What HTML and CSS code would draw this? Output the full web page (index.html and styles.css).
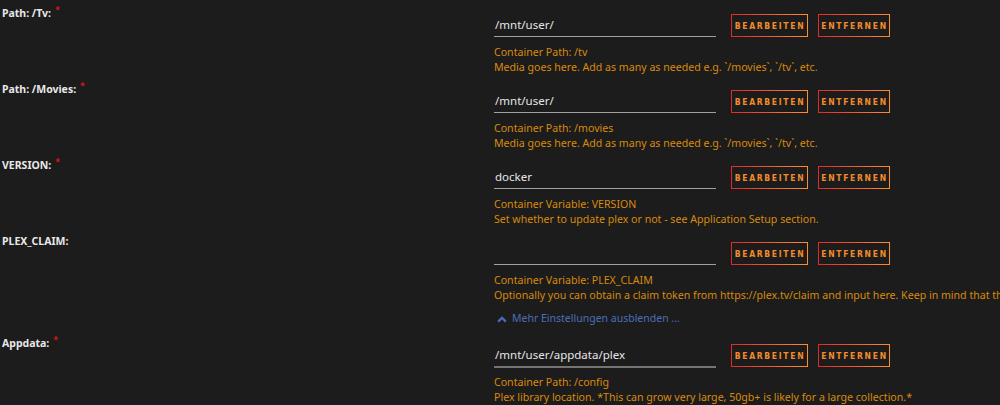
FILE: index.html
```html
<!DOCTYPE html>
<html>
<head>
<meta charset="utf-8">
<link rel="stylesheet" href="styles.css">
</head>
<body>
<div class="form">
  <div class="row">
    <div class="label">Path: /Tv:<span class="req">*</span></div>
    <div class="content">
      <div class="controls">
        <div class="input">/mnt/user/</div>
        <button class="btn"><span>Bearbeiten</span></button>
        <button class="btn narrow"><span>Entfernen</span></button>
      </div>
      <div class="desc">Container Path: /tv<br>Media goes here. Add as many as needed e.g. `/movies`, `/tv`, etc.</div>
    </div>
  </div>
  <div class="row">
    <div class="label">Path: /Movies:<span class="req">*</span></div>
    <div class="content">
      <div class="controls">
        <div class="input">/mnt/user/</div>
        <button class="btn"><span>Bearbeiten</span></button>
        <button class="btn narrow"><span>Entfernen</span></button>
      </div>
      <div class="desc">Container Path: /movies<br>Media goes here. Add as many as needed e.g. `/movies`, `/tv`, etc.</div>
    </div>
  </div>
  <div class="row">
    <div class="label">VERSION:<span class="req">*</span></div>
    <div class="content">
      <div class="controls">
        <div class="input">docker</div>
        <button class="btn"><span>Bearbeiten</span></button>
        <button class="btn narrow"><span>Entfernen</span></button>
      </div>
      <div class="desc">Container Variable: VERSION<br>Set whether to update plex or not - see Application Setup section.</div>
    </div>
  </div>
  <div class="row">
    <div class="label">PLEX_CLAIM:</div>
    <div class="content">
      <div class="controls">
        <div class="input"></div>
        <button class="btn"><span>Bearbeiten</span></button>
        <button class="btn narrow"><span>Entfernen</span></button>
      </div>
      <div class="desc clip">Container Variable: PLEX_CLAIM<br>Optionally you can obtain a claim token from https://plex.tv/claim and input here. Keep in mind that the claim tokens expire within 4 minutes.</div>
    </div>
  </div>
  <div class="toggle">
    <svg class="chev" width="10" height="8" viewBox="0 0 10 8"><path d="M1.2 6.6 L5 2.8 L8.8 6.6" fill="none" stroke="#4a6fb8" stroke-width="2.2"/></svg>
    <span>Mehr Einstellungen ausblenden ...</span>
  </div>
  <div class="row">
    <div class="label">Appdata:<span class="req">*</span></div>
    <div class="content">
      <div class="controls">
        <div class="input dim">/mnt/user/appdata/plex</div>
        <button class="btn"><span>Bearbeiten</span></button>
        <button class="btn narrow"><span>Entfernen</span></button>
      </div>
      <div class="desc">Container Path: /config<br>Plex library location. *This can grow very large, 50gb+ is likely for a large collection.*</div>
    </div>
  </div>
</div>
</body>
</html>
```
FILE: styles.css
```css
html, body {
  margin: 0;
  padding: 0;
  background: #1c1c1c;
  overflow: hidden;
  width: 1000px;
  height: 405px;
}
body {
  font-family: "Noto Sans", "DejaVu Sans", sans-serif;
  color: #e6e6e6;
}
.form {
  padding-top: 5px;
}
.row {
  display: flex;
  padding-bottom: 6px;
}
.label {
  width: 492px;
  padding-left: 2px;
  font-size: 10.5px;
  font-weight: bold;
  line-height: 16px;
  color: #e8e8e8;
  white-space: nowrap;
}
.req {
  color: #d41818;
  font-size: 9px;
  vertical-align: top;
  line-height: 10px;
  margin-left: 4px;
}
.content {
  flex: 1;
  min-width: 0;
  padding-top: 9px;
}
.controls {
  display: flex;
  align-items: flex-start;
  height: 24px;
}
.input {
  width: 222px;
  height: 23px;
  box-sizing: border-box;
  border-bottom: 1px solid #a0a0a0;
  font-size: 11.5px;
  line-height: 22px;
  color: #e6e6e6;
  padding-left: 1px;
  margin-right: 15px;
}
.input.dim {
  height: 24px;
  border-bottom: 2px solid #747474;
}
.btn {
  display: flex;
  height: 23px;
  width: 77px;
  box-sizing: border-box;
  border: none;
  padding: 1px;
  margin: 0 10px 0 0;
  background: linear-gradient(90deg, #e22828 0%, #ff8c2f 100%);
}
.btn.narrow {
  width: 72px;
}
.btn span {
  flex: 1;
  display: flex;
  align-items: center;
  justify-content: center;
  background: #1c1c1c;
  color: #f38b2c;
  font-family: "DejaVu Sans Condensed", "DejaVu Sans", sans-serif;
  font-stretch: condensed;
  font-size: 8.5px;
  font-weight: bold;
  letter-spacing: 1.7px;
  padding-left: 1px;
  text-transform: uppercase;
}
.desc {
  margin-top: 7px;
  font-size: 10.6px;
  line-height: 15px;
  color: #d98a0c;
  white-space: nowrap;
}
.clip {
  overflow: hidden;
}
.toggle {
  display: flex;
  align-items: center;
  margin-top: 2px;
  padding: 0 0 9px 497px;
  font-size: 10.5px;
  line-height: 15px;
  color: #4a6fb8;
  white-space: nowrap;
}
.chev {
  margin-right: 5px;
}
```
